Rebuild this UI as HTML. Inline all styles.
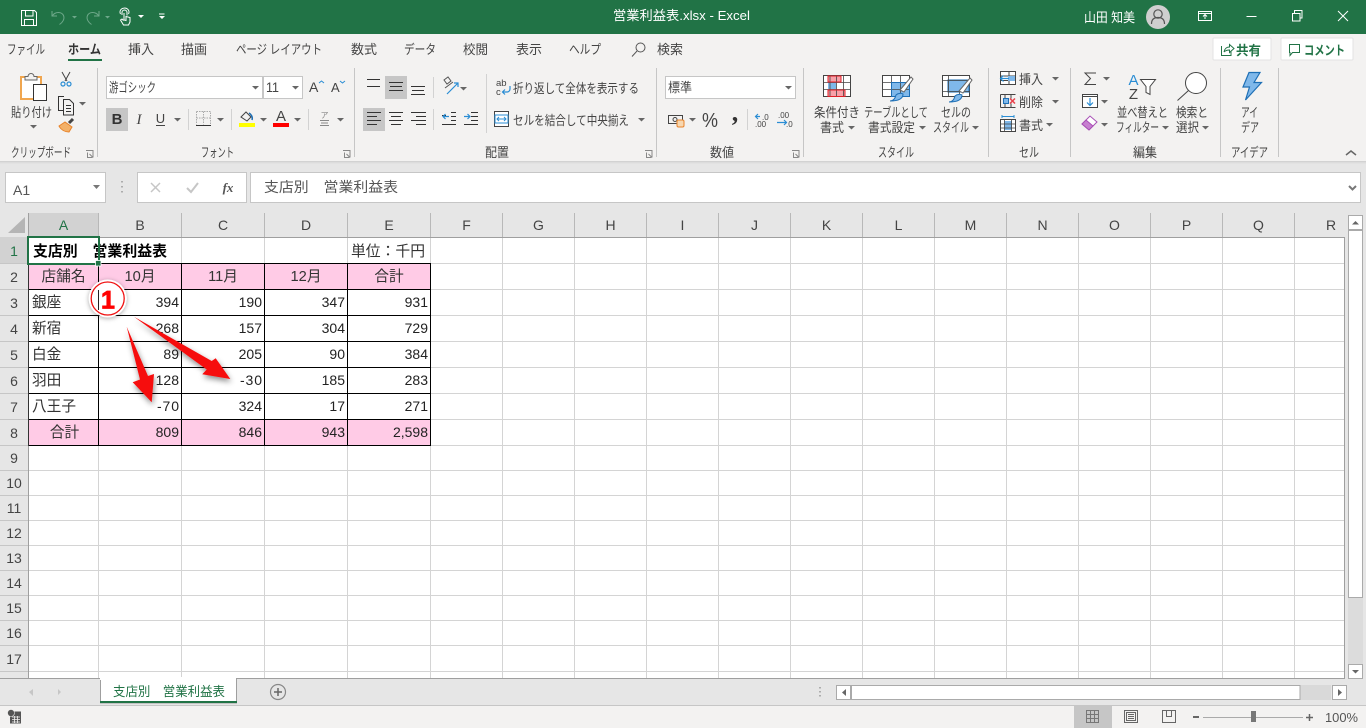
<!DOCTYPE html>
<html lang="ja"><head><meta charset="utf-8"><title>営業利益表.xlsx - Excel</title>
<style>
html,body{margin:0;padding:0;background:#fff;overflow:hidden}
svg{display:block}
text{font-family:"Liberation Sans","Noto Sans CJK JP",sans-serif;font-size:13px;fill:#444}
.w{fill:#fff}
.n{font-size:14px;fill:#222;text-anchor:end}
.j{font-size:14.67px;fill:#333}
.m{text-anchor:middle}
.h{font-size:14px;fill:#444;text-anchor:middle}
.g{font-size:14px;fill:#217346;text-anchor:middle}
.l{stroke:#444;fill:none;stroke-width:1}
.b{stroke:#2a8dd4;fill:none;stroke-width:1.2}
</style></head><body>
<svg xmlns="http://www.w3.org/2000/svg" width="1366" height="728" viewBox="0 0 1366 728">
<defs>
<path id="c" d="M0 0h7l-3.5 3.5z" fill="#666"/>
<path id="dl" d="M0 .5h7v7M1.5 2.5v5h5M3.5 4l3 3" fill="none" stroke="#888" stroke-width="1"/>
<filter id="sh" x="-30%" y="-30%" width="160%" height="160%"><feDropShadow dx="1" dy="3" stdDeviation="3" flood-color="#000" flood-opacity=".45"/></filter>
<filter id="gl" x="-30%" y="-30%" width="160%" height="160%"><feDropShadow dx="0" dy="1" stdDeviation="2.500" flood-color="#000" flood-opacity=".35"/></filter>
</defs>

<!-- backgrounds -->
<rect width="1366" height="728" fill="#e6e6e6"/>
<rect width="1366" height="34" fill="#217346"/>
<rect y="34" width="1366" height="127" fill="#f3f2f1"/>
<rect y="161" width="1366" height="1" fill="#d2d2d2"/><rect y="162" width="1366" height="1" fill="#dcdcdc"/><rect y="163" width="1366" height="1" fill="#e2e2e2"/>

<!-- title bar -->
<g fill="none" stroke="#fff" stroke-width="1">
<path d="M21.500 10.500h13l2 2v13h-15zM25.500 10.500v5.500h7.500v-5.500M24.500 25.500v-6h9v6"/>
<g stroke="#6ea88a"><path d="M52 11v5h5M52.500 15.500c3-4 9-4 11 0 1.500 3.500-1 7-4 9"/><path d="M99 11v5h-5M98.500 15.500c-3-4-9-4-11 0-1.500 3.500 1 7 4 9"/></g>
<path d="M122 15v-2.500a2.500 2.500 0 0 1 5 0v3M120.500 14a4 4 0 0 1 1-5c1.500-1 4-1.500 6 0a4 4 0 0 1 1 5M124 13v7l2 .5v-4l4 1v4.500l-1.500 3h-5l-3-5 1.500-1 1.500 1.500"/>
</g>
<path d="M72 16h5l-2.500 2.500z" fill="#6ea88a"/><path d="M105 16h5l-2.500 2.500z" fill="#6ea88a"/><path d="M138 15h6l-3 3z" fill="#fff"/>
<path d="M159 13.500h5.500v1h-5.500zM159 16h6l-3 3z" fill="#fff"/>
<text class="w" x="613" y="20" textLength="137" lengthAdjust="spacingAndGlyphs">営業利益表.xlsx  -  Excel</text>
<text class="w" x="1084" y="22" textLength="51" lengthAdjust="spacingAndGlyphs">山田 知美</text>
<circle cx="1158" cy="17" r="12" fill="#cfcfcf"/>
<g fill="none" stroke="#555" stroke-width="1.200"><circle cx="1158" cy="14" r="4.200"/><path d="M1151.500 24c0-5 3-6.500 6.500-6.500s6.500 1.500 6.500 6.500"/></g>
<g fill="none" stroke="#fff" stroke-width="1">
<path d="M1198.500 11.500h13v9h-13zM1198.500 13.500h13M1205 19v-4M1203 16.500l2-2 2 2"/>
<path d="M1246.500 16.500h10"/>
<path d="M1292.500 13.500h7.500v7.500h-7.500zM1294.500 13v-2.500h7.500v7.500h-2"/>
<path d="M1338 11l10 10M1348 11l-10 10"/>
</g>

<!-- tabs -->
<text x="7" y="54" textLength="38" lengthAdjust="spacingAndGlyphs">ファイル</text>
<text x="68" y="54" textLength="33" lengthAdjust="spacingAndGlyphs" font-weight="700" style="fill:#333">ホーム</text>
<rect x="68" y="59" width="34" height="2" fill="#217346"/>
<text x="128" y="54" textLength="26" lengthAdjust="spacingAndGlyphs">挿入</text>
<text x="181" y="54" textLength="26" lengthAdjust="spacingAndGlyphs">描画</text>
<text x="236" y="54" textLength="86" lengthAdjust="spacingAndGlyphs">ページ レイアウト</text>
<text x="351" y="54" textLength="26" lengthAdjust="spacingAndGlyphs">数式</text>
<text x="404" y="54" textLength="32" lengthAdjust="spacingAndGlyphs">データ</text>
<text x="463" y="54" textLength="25" lengthAdjust="spacingAndGlyphs">校閲</text>
<text x="516" y="54" textLength="26" lengthAdjust="spacingAndGlyphs">表示</text>
<text x="569" y="54" textLength="32" lengthAdjust="spacingAndGlyphs">ヘルプ</text>
<g class="l" stroke-width="1"><circle cx="640.500" cy="47.500" r="4.500" fill="none" stroke="#555"/><path d="M637 51l-5 5.500" stroke="#555"/></g>
<text x="657" y="54" textLength="26" lengthAdjust="spacingAndGlyphs">検索</text>

<!-- share / comment -->
<rect x="1213" y="38" width="58" height="22" rx="1" fill="#fff" stroke="#e3e3e3"/>
<rect x="1281" y="38" width="72" height="22" rx="1" fill="#fff" stroke="#e3e3e3"/>
<path d="M1221.500 46v9.500h9.500v-4M1224 52c.500-3 2.500-5 5.500-5v-2.500l4.500 4-4.500 4v-2.500c-2 0-4 .5-5.500 2" fill="none" stroke="#217346"/>
<text x="1236" y="55" textLength="25" lengthAdjust="spacingAndGlyphs" font-weight="700" style="fill:#217346">共有</text>
<path d="M1289.500 44.500h10v8h-7l-2.500 3v-3h-.500z" fill="none" stroke="#217346"/>
<text x="1304" y="55" textLength="41" lengthAdjust="spacingAndGlyphs" font-weight="700" style="fill:#217346">コメント</text>

<!-- group separators -->
<path d="M97.500 68v89M354.500 68v89M656.500 68v89M803.500 68v89M988.500 68v89M1070.500 68v89M1220.500 68v89M1278.500 68v89" stroke="#c6c6c6"/>
<path d="M188.500 109v21M231.500 109v21M308.500 109v21M433.500 77v21M433.500 109v21M486.500 74v59M747.500 109v21" stroke="#d2d2d2"/>

<!-- group labels -->
<text x="11" y="157" textLength="60" lengthAdjust="spacingAndGlyphs">クリップボード</text>
<text x="201" y="157" textLength="33" lengthAdjust="spacingAndGlyphs">フォント</text>
<text x="485" y="157" textLength="24" lengthAdjust="spacingAndGlyphs">配置</text>
<text x="710" y="157" textLength="24" lengthAdjust="spacingAndGlyphs">数値</text>
<text x="878" y="157" textLength="36" lengthAdjust="spacingAndGlyphs">スタイル</text>
<text x="1019" y="157" textLength="20" lengthAdjust="spacingAndGlyphs">セル</text>
<text x="1133" y="157" textLength="24" lengthAdjust="spacingAndGlyphs">編集</text>
<text x="1231" y="157" textLength="37" lengthAdjust="spacingAndGlyphs">アイデア</text>
<use href="#dl" x="86" y="150"/><use href="#dl" x="343" y="150"/><use href="#dl" x="645" y="150"/><use href="#dl" x="792" y="150"/>
<path d="M1346 155l5-4 5 4" fill="none" stroke="#666" stroke-width="1.500"/>

<!-- clipboard -->
<rect x="21" y="77" width="20" height="22" fill="#fff" stroke="#f0a64f" stroke-width="2"/>
<path d="M25 76.500h3a2.500 2.500 0 0 1 6 0h3v3.500h-12z" fill="#f3f2f1" stroke="#666"/>
<rect x="33.500" y="84.500" width="13" height="16" fill="#fff" stroke="#333"/>
<text x="11" y="117" textLength="41" lengthAdjust="spacingAndGlyphs">貼り付け</text>
<use href="#c" x="30" y="125"/>
<g fill="none" stroke="#444"><path d="M62 72l5 9M70 72l-5 9"/><circle cx="63" cy="84" r="2" stroke="#2a8dd4" stroke-width="1.200"/><circle cx="69" cy="84" r="2" stroke="#2a8dd4" stroke-width="1.200"/>
<path d="M63 110.500h-4.500v-14h5.500M63.500 99.500h6l4 4v11.500h-10zM66 105.500h5M66 108.500h5M66 111.500h5" stroke="#333"/></g>
<use href="#c" x="79" y="102"/>
<path d="M59 126l6-4 7 5-3 5c-4 0-8-2-10-6z" fill="#f3b169" stroke="#e8832a"/>
<path d="M69 123l4-4" stroke="#444" stroke-width="3"/>

<!-- font -->
<rect x="106.500" y="76.500" width="156" height="22" fill="#fff" stroke="#c6c6c6"/>
<rect x="263.500" y="76.500" width="39" height="22" fill="#fff" stroke="#c6c6c6"/>
<text x="109" y="92" textLength="47" lengthAdjust="spacingAndGlyphs">游ゴシック</text>
<text x="266" y="92" textLength="13" lengthAdjust="spacingAndGlyphs" style="font-size:14px">11</text>
<use href="#c" x="252" y="86"/><use href="#c" x="292" y="86"/>
<text x="309" y="92" style="font-size:14px">A</text><path d="M319 83l2.500-2 2.500 2" fill="none" stroke="#2a8dd4"/>
<text x="331" y="92" style="font-size:13px">A</text><path d="M340 81l2.500 2 2.500-2" fill="none" stroke="#2a8dd4"/>
<rect x="106" y="108" width="22" height="23" fill="#c6c6c6"/>
<text x="117" y="124" class="m" font-weight="700" style="font-size:15px;fill:#333">B</text>
<text x="139" y="124" class="m" font-style="italic" style="font-family:'Liberation Serif',serif;font-size:15px">I</text>
<text x="160.500" y="123" class="m" style="font-size:13px">U</text><path d="M156 125.500h9" stroke="#444"/>
<use href="#c" x="174" y="118"/>
<path d="M196.500 111.500h14v13M196.500 111.500v13M203.500 111.500v13M196.500 118h14" fill="none" stroke="#aaa" stroke-dasharray="1.500 1"/><path d="M196 125.500h15" stroke="#333"/>
<use href="#c" x="217" y="118"/>
<path d="M241 117l5-5 5 5-4 4z" fill="none" stroke="#444"/><path d="M249 113c2 1 4 4 3 7" stroke="#1e6fb5" fill="none" stroke-width="1.500"/>
<rect x="239" y="123" width="16" height="4" fill="#ff0"/>
<use href="#c" x="260" y="118"/>
<text x="281" y="121" class="m" style="font-size:15px">A</text>
<rect x="273" y="123" width="16" height="4" fill="#f00"/>
<use href="#c" x="294" y="118"/>
<text x="324.500" y="118" class="m" style="font-size:8px;fill:#888">ア</text>
<path d="M320 120.500h9M321 123h7M320 125.500h9" stroke="#888"/>
<use href="#c" x="337" y="118"/>

<!-- alignment -->
<rect x="385" y="76" width="22" height="23" fill="#c6c6c6"/>
<rect x="363" y="108" width="22" height="23" fill="#c6c6c6"/>
<path d="M367 79.500h13M367 86.500h13M389 82.500h14M390 86.500h12M389 90.500h14M411 86.500h14M412 90.500h12M411 94.500h14M367 112.500h14M367 116.500h10M367 120.500h14M367 124.500h10M389 112.500h14M391 116.500h10M389 120.500h14M391 124.500h10M411 112.500h15M416 116.500h10M411 120.500h15M416 124.500h10" stroke="#333"/>
<path d="M445 88l8-6M444 80l4-3 3 4-4 3z" fill="none" stroke="#555"/><path d="M447 94l11-11M454 83h4v4" class="b"/>
<use href="#c" x="460" y="87"/>
<path d="M442 115.500h4M451 112.500h5M451 116.500h5M451 120.500h5M442 124.500h14" stroke="#333"/><path d="M449 116.500h-6M445.500 114l-2.500 2.500 2.500 2.500" class="b"/>
<path d="M471 112.500h7M471 116.500h7M471 120.500h7M464 124.500h14" stroke="#333"/><path d="M464 116.500h6M467.500 114l2.500 2.500-2.500 2.500" class="b"/>
<text x="496" y="86" style="font-size:9.500px">ab</text><text x="496" y="95" style="font-size:9.500px">c</text>
<path d="M510 86v3a3 3 0 0 1-3 3h-4M505 89.500l-2.500 2.500 2.500 2.500" class="b"/>
<text x="513" y="93" textLength="126" lengthAdjust="spacingAndGlyphs">折り返して全体を表示する</text>
<rect x="494.500" y="111.500" width="14" height="15" fill="#fff" stroke="#444"/>
<rect x="495" y="115" width="13" height="8" fill="#fff" stroke="#2a8dd4"/>
<path d="M497 119h9M499 117l-2 2 2 2M504 117l2 2-2 2" fill="none" stroke="#2a8dd4"/>
<text x="513" y="125" textLength="116" lengthAdjust="spacingAndGlyphs">セルを結合して中央揃え</text>
<use href="#c" x="638" y="118"/>

<!-- number -->
<rect x="665.500" y="76.500" width="130" height="22" fill="#fff" stroke="#c6c6c6"/>
<text x="668" y="92" textLength="24" lengthAdjust="spacingAndGlyphs">標準</text>
<use href="#c" x="785" y="86"/>
<rect x="668.500" y="115.500" width="14" height="8" fill="none" stroke="#444"/><circle cx="675" cy="119.500" r="2" fill="none" stroke="#444"/>
<rect x="677" y="120" width="7" height="7" rx="1.500" fill="#f7d7b0" stroke="#e8832a"/>
<use href="#c" x="689" y="118"/>
<text x="702" y="127" textLength="16" lengthAdjust="spacingAndGlyphs" style="font-size:20px">%</text>
<text x="735" y="121" class="m" font-weight="700" style="font-size:26px;font-family:'Liberation Serif',serif;fill:#333">,</text>
<path d="M760 116.500h-4M758 114l-2.500 2.500 2.500 2.500M777 122.500h10M784 120l2.500 2.500-2.500 2.500" class="b"/>
<text x="762" y="120" style="font-size:8px">.0</text><text x="755" y="127" style="font-size:8px">.00</text>
<text x="778" y="118" style="font-size:8px">.00</text><text x="786" y="127" style="font-size:8px">.0</text>

<!-- styles -->
<g>
<rect x="823.500" y="75.500" width="27" height="21" fill="#fff" stroke="#444"/>
<rect x="828" y="76" width="13" height="6" fill="#f8a0a8"/>
<rect x="828" y="82" width="8" height="7" fill="#7fb8ea"/>
<rect x="828" y="90" width="17" height="6.500" fill="#f8a0a8"/>
<path d="M823 82.500h28M823 89.500h28M830 75v22M836.500 75v22M843.500 75v22" stroke="#444" stroke-width=".8" fill="none"/>
<path d="M828 76h13v6h-13zM828 90h17v6.500h-17z" fill="none" stroke="#e01f27"/>
</g>
<g>
<rect x="882.500" y="75.500" width="27" height="21" fill="#fff" stroke="#444"/>
<rect x="891" y="82" width="18" height="14.500" fill="#7fb8ea"/>
<path d="M882 82.500h28M882 89.500h28M891.500 75v22M900.500 75v22" stroke="#444" stroke-width=".8"/>
<path d="M891.500 82.500h18v14h-18z" fill="none" stroke="#1e6fb5"/>
<path d="M900 90l11-13 2 2-9 13z" fill="#fff" stroke="#666"/>
<path d="M890 101c3 0 5-2 6-6 2-2 6-2 7-1 0 4-3 7-13 7z" fill="#7fb8ea" stroke="#1e6fb5"/>
</g>
<g>
<rect x="942.500" y="75.500" width="27" height="21" fill="#fff" stroke="#444"/>
<rect x="948" y="80" width="21" height="12" fill="#7fb8ea" stroke="#1e6fb5"/>
<path d="M942 80.500h28M942 91.500h28M948.500 75v22M959.500 92v5" stroke="#444" stroke-width=".8"/>
<path d="M959 91l11-13 2 2-9 13z" fill="#fff" stroke="#666"/>
<path d="M949 102c3 0 5-2 6-6 2-2 6-2 7-1 0 4-3 7-13 7z" fill="#7fb8ea" stroke="#1e6fb5"/>
</g>
<text x="814" y="117" textLength="46" lengthAdjust="spacingAndGlyphs">条件付き</text>
<text x="820" y="132" textLength="24" lengthAdjust="spacingAndGlyphs">書式</text><use href="#c" x="848" y="126"/>
<text x="864" y="117" textLength="64" lengthAdjust="spacingAndGlyphs">テーブルとして</text>
<text x="868" y="132" textLength="47" lengthAdjust="spacingAndGlyphs">書式設定</text><use href="#c" x="919" y="126"/>
<text x="941" y="117" textLength="30" lengthAdjust="spacingAndGlyphs">セルの</text>
<text x="933" y="132" textLength="36" lengthAdjust="spacingAndGlyphs">スタイル</text><use href="#c" x="972" y="126"/>

<!-- cells -->
<path d="M1000.500 71.500h15v13h-15zM1000.500 76h15M1000.500 80.500h15M1009 71.500v13" fill="#fff" stroke="#444"/>
<rect x="1008" y="76" width="7" height="5" fill="#7fb8ea"/>
<path d="M1009 78.500h-8M1003.500 75.500l-3 3 3 3" class="b"/>
<text x="1019" y="84" textLength="24" lengthAdjust="spacingAndGlyphs">挿入</text><use href="#c" x="1052" y="77"/>
<path d="M1000.500 94.500h15M1000.500 107.500h15M1000.500 94.500v13M1005 94.500v4M1005 103.500v4M1011 94.500v4M1011 103.500v4" fill="none" stroke="#444"/>
<rect x="1003.500" y="98.500" width="5" height="5" fill="#7fb8ea" stroke="#1e6fb5"/>
<path d="M1010 98.500l5 5M1015 98.500l-5 5" stroke="#e8404a" stroke-width="1.500"/>
<text x="1019" y="107" textLength="24" lengthAdjust="spacingAndGlyphs">削除</text><use href="#c" x="1052" y="100"/>
<rect x="1000.500" y="119.500" width="15" height="12" fill="#fff" stroke="#444"/>
<rect x="1004" y="121" width="8" height="9" fill="#7fb8ea"/>
<path d="M1000.500 124h15M1000.500 128h15M1004.500 119.500v12M1011.500 119.500v12" stroke="#444" stroke-width=".8"/>
<path d="M1002 116.500h12M1002 115v3M1014 115v3" stroke="#2a8dd4"/>
<text x="1019" y="130" textLength="24" lengthAdjust="spacingAndGlyphs">書式</text><use href="#c" x="1046" y="123"/>

<!-- editing -->
<path d="M1096 73h-11l5.500 5.500-5.500 6h11" fill="none" stroke="#444"/><use href="#c" x="1103" y="77"/>
<rect x="1082.500" y="94.500" width="15" height="13" fill="#fff" stroke="#444"/><path d="M1082 96.500h16" stroke="#444"/><path d="M1090 98v7M1087 102.500l3 3 3-3" class="b"/>
<use href="#c" x="1101" y="100"/>
<path d="M1082 124l8-8 7 6-8 8z" fill="#fff" stroke="#a84fb5"/><path d="M1082 124l4-4 7 6-4 4z" fill="#c77fd0" stroke="#a84fb5"/>
<use href="#c" x="1101" y="123"/>
<text x="1133.500" y="85" class="m" style="font-size:15px;fill:#2a8dd4">A</text>
<text x="1133.500" y="99" class="m" style="font-size:15px">Z</text>
<path d="M1140.500 79.500h15l-5.500 7v8l-4-2v-6z" fill="#fff" stroke="#444"/>
<text x="1117" y="117" textLength="51" lengthAdjust="spacingAndGlyphs">並べ替えと</text>
<text x="1116" y="132" textLength="43" lengthAdjust="spacingAndGlyphs">フィルター</text><use href="#c" x="1162" y="126"/>
<circle cx="1196" cy="83" r="10.500" fill="#fff" stroke="#444"/><path d="M1188.500 90.500l-11 10" stroke="#444"/>
<text x="1176" y="117" textLength="32" lengthAdjust="spacingAndGlyphs">検索と</text>
<text x="1176" y="132" textLength="23" lengthAdjust="spacingAndGlyphs">選択</text><use href="#c" x="1202" y="126"/>

<!-- ideas -->
<path d="M1249 72.500h11l-6 10h7.500l-16 17.500 4-13h-6.500z" fill="#7fb8ea" stroke="#1e6fb5" stroke-width="1.200"/>
<text x="1241" y="117" textLength="17" lengthAdjust="spacingAndGlyphs">アイ</text>
<text x="1241" y="132" textLength="18" lengthAdjust="spacingAndGlyphs">デア</text>

<!-- formula bar -->
<rect x="5.500" y="172.500" width="100" height="30" fill="#fff" stroke="#c6c6c6"/>
<text x="13" y="195" style="font-size:14px;fill:#555">A1</text>
<path d="M93 185h7l-3.500 4z" fill="#777"/>
<path d="M122 181v1.500M122 186v1.500M122 191v1.500" stroke="#999" stroke-width="1.500"/>
<rect x="137.500" y="172.500" width="109" height="30" fill="#fff" stroke="#c6c6c6"/>
<path d="M151 183l9 9M160 183l-9 9" stroke="#c6c6c6" stroke-width="1.500"/>
<path d="M187 188l4 4 7-9" fill="none" stroke="#c6c6c6" stroke-width="2"/>
<text x="228" y="192" class="m" font-style="italic" style="font-family:'Liberation Serif',serif;font-size:13px;fill:#555;font-weight:700">fx</text>
<rect x="250.500" y="172.500" width="1110" height="30" fill="#fff" stroke="#c6c6c6"/>
<text x="264" y="192" textLength="134" lengthAdjust="spacingAndGlyphs" style="font-size:14px;fill:#555">支店別　営業利益表</text>
<path d="M1349 186l3.500 3.500 3.500-3.500" fill="none" stroke="#777" stroke-width="2"/>

<!-- sheet -->
<rect x="28" y="237" width="1317" height="441" fill="#fff"/>
<rect x="28" y="213" width="70.500" height="24" fill="#d2d2d2"/>
<rect x="0" y="237" width="28" height="27" fill="#d2d2d2"/>
<path d="M25 217v16H8z" fill="#b5b5b5"/>
<path d="M98.500 213v24M181.500 213v24M264.500 213v24M347.500 213v24M430.500 213v24M502.500 213v24M574.500 213v24M646.500 213v24M718.500 213v24M790.500 213v24M862.500 213v24M934.500 213v24M1006.500 213v24M1078.500 213v24M1150.500 213v24M1222.500 213v24M1294.500 213v24" stroke="#b8b8b8"/>
<path d="M0 263.500h28M0 289.500h28M0 315.500h28M0 341.500h28M0 367.500h28M0 393.500h28M0 419.500h28M0 445.500h28M0 470.500h28M0 495.500h28M0 520.500h28M0 545.500h28M0 570.500h28M0 595.500h28M0 620.500h28M0 645.500h28M0 671.500h28" stroke="#c6c6c6"/>
<path d="M28.500 213V678M28 237.500H1345" stroke="#9f9f9f"/>
<path d="M98.500 238V678M181.500 238V678M264.500 238V678M347.500 238V678M430.500 238V678M502.500 238V678M574.500 238V678M646.500 238V678M718.500 238V678M790.500 238V678M862.500 238V678M934.500 238V678M1006.500 238V678M1078.500 238V678M1150.500 238V678M1222.500 238V678M1294.500 238V678M29 263.500H1344M29 289.500H1344M29 315.500H1344M29 341.500H1344M29 367.500H1344M29 393.500H1344M29 419.500H1344M29 445.500H1344M29 470.500H1344M29 495.500H1344M29 520.500H1344M29 545.500H1344M29 570.500H1344M29 595.500H1344M29 620.500H1344M29 645.500H1344M29 671.500H1344" stroke="#d4d4d4"/>
<path d="M1344.500 237V678" stroke="#9f9f9f"/>
<!-- pink -->
<rect x="29" y="264" width="402" height="25.500" fill="#ffcbe6"/>
<rect x="29" y="420" width="402" height="25.500" fill="#ffcbe6"/>
<path d="M98.500 264V445.500M181.500 264V445.500M264.500 264V445.500M347.500 264V445.500M430.500 264V445.500M98 263.500H431M29 289.500H431M29 315.500H431M29 341.500H431M29 367.500H431M29 393.500H431M29 419.500H431M29 445.500H431" stroke="#000"/>
<path d="M28.500 264V446" stroke="#333"/>

<!-- column headers -->
<text class="g" x="63.500" y="230">A</text>
<text class="h" x="140" y="230">B</text><text class="h" x="223" y="230">C</text><text class="h" x="306" y="230">D</text><text class="h" x="389" y="230">E</text><text class="h" x="466.500" y="230">F</text><text class="h" x="538.500" y="230">G</text><text class="h" x="610.500" y="230">H</text><text class="h" x="682.500" y="230">I</text><text class="h" x="754.500" y="230">J</text><text class="h" x="826.500" y="230">K</text><text class="h" x="898.500" y="230">L</text><text class="h" x="970.500" y="230">M</text><text class="h" x="1042.500" y="230">N</text><text class="h" x="1114.500" y="230">O</text><text class="h" x="1186.500" y="230">P</text><text class="h" x="1258.500" y="230">Q</text><text class="h" x="1331" y="230">R</text>
<!-- row headers -->
<text class="g" x="14" y="256">1</text>
<text class="h" x="14" y="282">2</text><text class="h" x="14" y="308">3</text><text class="h" x="14" y="334">4</text><text class="h" x="14" y="360">5</text><text class="h" x="14" y="386">6</text><text class="h" x="14" y="412">7</text><text class="h" x="14" y="438">8</text><text class="h" x="14" y="463">9</text><text class="h" x="14" y="488">10</text><text class="h" x="14" y="513">11</text><text class="h" x="14" y="538">12</text><text class="h" x="14" y="563">13</text><text class="h" x="14" y="588">14</text><text class="h" x="14" y="613">15</text><text class="h" x="14" y="638">16</text><text class="h" x="14" y="664">17</text>

<!-- cells -->
<text class="j" x="33" y="256" font-weight="700" style="fill:#000" textLength="134" lengthAdjust="spacingAndGlyphs">支店別　営業利益表</text>
<text class="j" x="351" y="256" textLength="74" lengthAdjust="spacingAndGlyphs">単位：千円</text>
<text class="j m" x="63.500" y="281">店舗名</text>
<text class="j m" x="140" y="281">10月</text><text class="j m" x="223" y="281">11月</text><text class="j m" x="306" y="281">12月</text><text class="j m" x="389" y="281">合計</text>
<text class="j" x="32" y="307">銀座</text><text class="j" x="32" y="333">新宿</text><text class="j" x="32" y="359">白金</text><text class="j" x="32" y="385">羽田</text><text class="j" x="32" y="411">八王子</text>
<text class="j m" x="64.500" y="437">合計</text>
<text class="n" x="179" y="307">394</text><text class="n" x="262" y="307">190</text><text class="n" x="345" y="307">347</text><text class="n" x="428" y="307">931</text>
<text class="n" x="179" y="333">268</text><text class="n" x="262" y="333">157</text><text class="n" x="345" y="333">304</text><text class="n" x="428" y="333">729</text>
<text class="n" x="179" y="359">89</text><text class="n" x="262" y="359">205</text><text class="n" x="345" y="359">90</text><text class="n" x="428" y="359">384</text>
<text class="n" x="179" y="385">128</text><text class="n" x="262" y="385" textLength="22" lengthAdjust="spacing">-30</text><text class="n" x="345" y="385">185</text><text class="n" x="428" y="385">283</text>
<text class="n" x="179" y="411" textLength="22" lengthAdjust="spacing">-70</text><text class="n" x="262" y="411">324</text><text class="n" x="345" y="411">17</text><text class="n" x="428" y="411">271</text>
<text class="n" x="179" y="437">809</text><text class="n" x="262" y="437">846</text><text class="n" x="345" y="437">943</text><text class="n" x="428" y="437">2,598</text>

<!-- selection -->
<rect x="28" y="237" width="71" height="27" fill="none" stroke="#217346" stroke-width="2"/>
<rect x="95.500" y="260.500" width="5.500" height="5.500" fill="#217346" stroke="#fff" stroke-width=".8"/>

<!-- annotation -->
<circle cx="107.700" cy="298.500" r="19" fill="#fff" filter="url(#gl)"/>
<circle cx="107.700" cy="298.500" r="16.500" fill="#fff" stroke="#f01010" stroke-width="1.300"/>
<path d="M98.500 290v20" stroke="#222"/>
<text x="108" y="308.500" class="m" font-weight="700" style="font-size:25px;fill:#f00;stroke:#f00;stroke-width:.8">1</text>
<g fill="#f60a0a" filter="url(#sh)">
<path d="M134 316.700L211.700 361L215.700 358.300L230.300 379L202.300 374.300L206.700 369.500z"/>
<path d="M126.700 326.700L148 376L154 374L151.700 402.300L132.700 382.300L140 379.500z"/>
</g>

<!-- sheet tabs -->
<path d="M0 678.500H1345" stroke="#9f9f9f"/>
<path d="M29 692l4-3v7zM58 689l3 3-3 3z" fill="#c6c6c6"/>
<path d="M100.500 678.500V703H236.500V678.500" fill="#fff" stroke="#9f9f9f"/>
<rect x="100" y="677" width="136" height="3" fill="#fff"/>
<rect x="100" y="701" width="137" height="2" fill="#217346"/>
<text x="113" y="696" textLength="112" lengthAdjust="spacingAndGlyphs" style="fill:#217346">支店別　営業利益表</text>
<circle cx="278" cy="692" r="7.500" fill="none" stroke="#888" stroke-width="1.200"/>
<path d="M274 692h8M278 688v8" stroke="#666" stroke-width="1.500"/>
<path d="M820 687v1.500M820 691v1.500M820 695v1.500" stroke="#999" stroke-width="1.500"/>
<rect x="836.500" y="685.500" width="14" height="14" fill="#fff" stroke="#aaa"/><path d="M846 689v7l-4-3.500z" fill="#666"/>
<rect x="851" y="685" width="480" height="15" fill="#d9d9d9"/>
<rect x="851.500" y="685.500" width="448.500" height="14" fill="#fff" stroke="#aaa"/>
<rect x="1332.500" y="685.500" width="14" height="14" fill="#fff" stroke="#aaa"/><path d="M1338 689v7l4-3.500z" fill="#666"/>

<!-- vertical scroll -->
<rect x="1348" y="215" width="15" height="464" fill="#dcdcdc"/>
<rect x="1348.500" y="215.500" width="14" height="14" fill="#fff" stroke="#aaa"/><path d="M1352 224.500h7l-3.500-3.500z" fill="#666"/>
<rect x="1348.500" y="230.500" width="14" height="367" fill="#fff" stroke="#aaa"/>
<rect x="1348.500" y="664.500" width="14" height="14" fill="#fff" stroke="#aaa"/><path d="M1352 670h7l-3.500 3.500z" fill="#666"/>

<!-- status bar -->
<rect y="705" width="1366" height="23" fill="#f3f2f1"/>
<rect y="705" width="1366" height="1" fill="#c6c6c6"/>
<rect x="10" y="711.500" width="11" height="12" fill="#555"/>
<circle cx="11" cy="713" r="3.500" fill="#555" stroke="#f3f2f1" stroke-width=".6"/>
<path d="M12 717h8M12 719.500h8M12 722h8M14.500 716v7M17.500 716v7" stroke="#f3f2f1" stroke-width=".8"/>
<rect x="1074" y="706" width="38" height="22" fill="#c6c6c6"/>
<path d="M1086.500 710.500h12v12h-12zM1086.500 714.500h12M1086.500 718.500h12M1090.500 710.500v12M1094.500 710.500v12" fill="none" stroke="#777"/>
<path d="M1124.500 710.500h13v12h-13zM1126.500 712.500h9v8h-9zM1128 714.500h6M1128 716.500h6M1128 718.500h6" fill="none" stroke="#666"/>
<path d="M1162.500 710.500h13v12h-13zM1166.500 710.500v6h5v-6" fill="none" stroke="#666"/>
<rect x="1193" y="716" width="6" height="2" fill="#666"/>
<rect x="1203" y="717" width="100" height="1" fill="#aaa"/>
<rect x="1251" y="711" width="5" height="11" fill="#777"/>
<path d="M1306 717.500h7M1309.500 714v7" stroke="#666" stroke-width="1.500"/>
<text x="1325" y="722" textLength="33" lengthAdjust="spacingAndGlyphs" style="fill:#555">100%</text>
</svg>
</body></html>
